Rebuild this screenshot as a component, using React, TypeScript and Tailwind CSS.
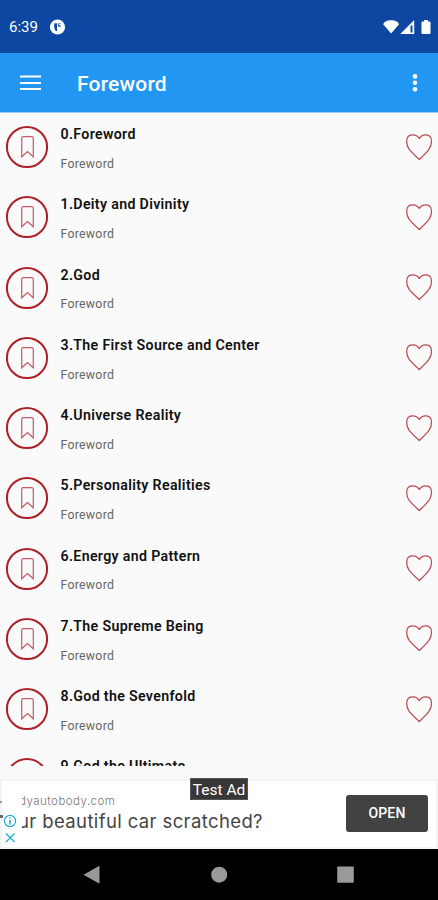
const TITLES = [
  "Foreword",
  "Deity and Divinity",
  "God",
  "The First Source and Center",
  "Universe Reality",
  "Personality Realities",
  "Energy and Pattern",
  "The Supreme Being",
  "God the Sevenfold",
  "God the Ultimate",
];

function StatusBar() {
  return (
    <div className="flex h-[53px] shrink-0 items-center bg-[#0d47a1] pr-[7px] pl-[9px] text-white">
      <span className="w-[41px] text-[15px] leading-5">6:39</span>
      <svg width="16" height="16" viewBox="0 0 16 16" className="shrink-0">
        <circle cx="7.500" cy="8" r="7.600" fill="#fff" />
        <path d="M4.500 4.300h2.500v7.700H5.800C4 10 3.800 7 4.500 4.300z" fill="#0d47a1" />
        <path d="M8.200 4.300h2.600v3.500H8.200z" fill="#0d47a1" />
        <circle cx="10.200" cy="5.700" r="1.100" fill="#fff" />
      </svg>
      <svg width="48" height="16" viewBox="0 0 48 16" fill="#fff" className="ml-auto shrink-0">
        <path d="M.2 5.200C1.200 2.200 4.500 1.200 8.100 1.200s6.900 1 7.900 4L8.100 14.500z" />
        <path fillRule="evenodd" d="M31.200 1v14H17.300zM27.500 6.400v7.200h2V6.400z" />
        <path d="M41 1h4v1.600h1.600c.5 0 .9.400.9.900v10.600c0 .5-.4.900-.9.900h-7.200a.9.900 0 0 1-.9-.9V3.500c0-.5.4-.9.900-.9H41z" />
      </svg>
    </div>
  );
}

function AppBar() {
  return (
    <div className="flex h-[59px] shrink-0 items-center bg-[#2196f3] px-5 pt-px text-white">
      <svg width="21" height="16" viewBox="0 0 21 16" fill="#fff" className="-mt-px">
        <path d="M0 .500h21v2H0zM0 6.900h21v2H0zM0 13.100h21v2H0z" />
      </svg>
      <h1 className="ml-9 pt-px text-[21px] leading-7 font-medium tracking-[0.200px]">Foreword</h1>
      <svg width="6" height="20" viewBox="0 0 6 20" fill="#fff" className="ml-auto">
        <circle cx="3" cy="3.400" r="2.300" />
        <circle cx="3" cy="9.800" r="2.300" />
        <circle cx="3" cy="16.200" r="2.300" />
      </svg>
    </div>
  );
}

function Row({ index, title }: { index: number; title: string }) {
  return (
    <li className="flex h-[70.250px] shrink-0 items-center px-[5px]">
      <svg width="44" height="44" viewBox="0 0 44 44" fill="none" className="mb-[2px] shrink-0">
        <circle cx="22" cy="22" r="20.100" stroke="#ad2025" strokeWidth="2" />
        <path d="M18.100 11.700h8.600q1.600 0 1.600 1.600v18.500l-5.800-5.200-5.800 5.200V13.300q0-1.600 1.400-1.600z" stroke="#c35d63" strokeWidth="1.200" />
      </svg>
      <div className="ml-[11.500px] flex flex-col gap-[9.700px] pt-[1.600px] whitespace-nowrap">
        <span className="text-[14.200px] leading-5 font-semibold tracking-[0.330px] text-[#111]">{index}.{title}</span>
        <span className="text-[12.300px] leading-5 tracking-[0.270px] text-[#666]">Foreword</span>
      </div>
      <svg width="28" height="28" viewBox="0 0 28 28" fill="none" className="mb-[3px] ml-auto shrink-0">
        <path d="M14.300 26.500C10.500 23.200 7.200 20 4.300 16.700 2.300 13.800 1.600 11.300 1.700 8.200c0-4 2.300-6.200 5.400-6.400 3-.2 5.600 1.100 7.200 3.700 1.600-2.600 3.800-3.900 6.800-3.700 3.100.2 5.400 2.400 5.400 6.400.1 3.100-.6 5.600-2.700 8.500-2.700 3.500-5.900 6.500-9.500 9.800z" stroke="#b94b53" strokeWidth="1.250" strokeLinejoin="round" />
      </svg>
    </li>
  );
}

function AdBanner() {
  return (
    <div className="relative flex h-[70px] shrink-0 items-center border-2 border-[#f3f4f4] bg-white pr-2 pl-5 font-['Inter','Noto_Sans',sans-serif]">
      <div className="flex flex-col gap-px overflow-hidden pb-[3px] whitespace-nowrap">
        <span className="-ml-[3px] text-[11.500px] leading-[15px] font-light tracking-[0.480px] text-[#777]">dyautobody.com</span>
        <span className="-ml-[4px] text-[18.500px] leading-[22px] tracking-[0.380px] text-[#444]">ur beautiful car scratched?</span>
      </div>
      <button className="mb-px ml-auto h-[37px] w-[82px] shrink-0 rounded-[3px] bg-[#424242] font-['Roboto',sans-serif] text-[14px] font-medium tracking-[0.200px] text-white">
        OPEN
      </button>
      <span className="absolute top-[-3px] left-[188px] h-[22px] w-[58px] border border-[#555] bg-[#373737] text-center font-['Roboto',sans-serif] text-[15.500px] leading-[22px] whitespace-nowrap text-white">
        Test Ad
      </span>
      <svg width="16" height="34" viewBox="0 0 16 34" fill="none" stroke="#20acd4" className="absolute top-[33px] left-0">
        <circle cx="8" cy="7" r="5.600" strokeWidth="1.200" />
        <path d="M8 6v4.500M8 3.500v1.300" strokeWidth="1.500" />
        <path d="m4 19.500 8.500 8.500m0-8.500L4 28" strokeWidth="1.300" />
      </svg>
      <span className="absolute top-[20px] -left-[2px] h-[2px] w-[2px] bg-[#999]" />
      <span className="absolute top-[34px] -left-[2px] h-[3px] w-[3px] bg-[#666]" />
    </div>
  );
}

function NavBar() {
  return (
    <div className="flex h-[51px] shrink-0 items-center bg-black pt-px">
      <svg width="438" height="20" viewBox="0 0 438 20" fill="#999">
        <path d="M83.500 9.700 99.500.7v18z" />
        <circle cx="219.200" cy="9.700" r="8" />
        <rect x="337.200" y="1.400" width="16.600" height="16.400" rx=".8" />
      </svg>
    </div>
  );
}

export default function App() {
  return (
    <div className="flex h-[900px] w-[438px] flex-col overflow-hidden bg-[#fafafa] font-['Roboto',sans-serif]">
      <StatusBar />
      <AppBar />
      <ul className="flex h-[654px] shrink-0 flex-col overflow-hidden border-t border-[#9dcdfa]">
        {TITLES.map((title, index) => (
          <Row key={title} index={index} title={title} />
        ))}
      </ul>
      <div className="h-[13px] shrink-0" />
      <AdBanner />
      <NavBar />
    </div>
  );
}
